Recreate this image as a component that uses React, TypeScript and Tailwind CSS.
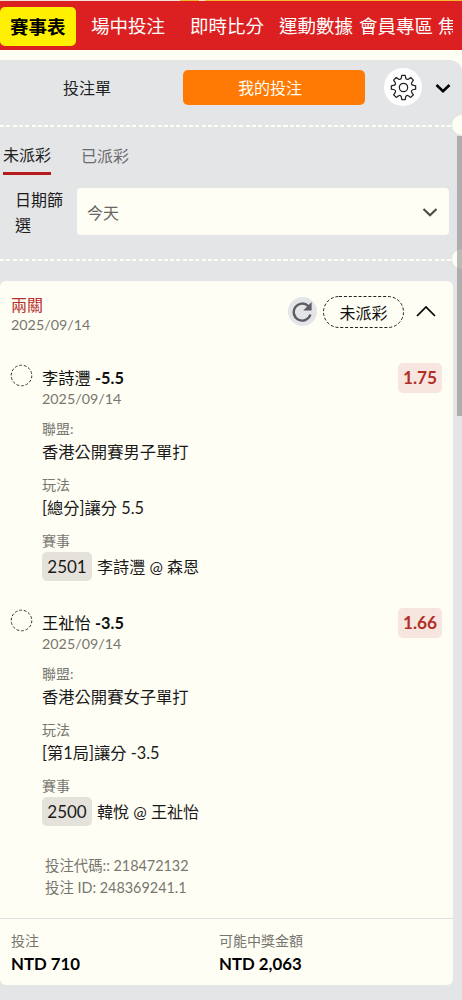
import clsx from "clsx";

interface Leg {
  id: string;
  player: string;
  handicap: string;
  date: string;
  odds: string;
  league: string;
  market: string;
  matchCode: string;
  match: string;
}

const legs: Leg[] = [
  {
    id: "2501",
    player: "李詩灃",
    handicap: "-5.5",
    date: "2025/09/14",
    odds: "1.75",
    league: "香港公開賽男子單打",
    market: "[總分]讓分 5.5",
    matchCode: "2501",
    match: "李詩灃 @ 森恩",
  },
  {
    id: "2500",
    player: "王祉怡",
    handicap: "-3.5",
    date: "2025/09/14",
    odds: "1.66",
    league: "香港公開賽女子單打",
    market: "[第1局]讓分 -3.5",
    matchCode: "2500",
    match: "韓悅 @ 王祉怡",
  },
];

const TopNav = () => (
  <div className="shrink-0">
    <div className="flex h-px bg-[#f3dfdc]">
      <div className="ml-[180px] w-[19px] bg-[#f0b92c]" />
      <div className="ml-[6px] flex-1 bg-[#f3b92f]" />
    </div>
    <nav className="flex h-[49px] items-center overflow-hidden bg-[#dc1f20] text-[18.5px] leading-[39px] whitespace-nowrap text-white">
      <a className="mt-px h-[39px] w-[76px] shrink-0 rounded-[5px] bg-[#fff000] pl-[10px] leading-[40px] font-bold text-black">賽事表</a>
      <a className="mt-px ml-[15px] w-[74px] shrink-0">場中投注</a>
      <a className="mt-px ml-[25px] w-[74px] shrink-0">即時比分</a>
      <a className="mt-px ml-[15px] w-[74px] shrink-0">運動數據</a>
      <a className="mt-px ml-[6px] w-[74px] shrink-0">會員專區</a>
      <a className="mt-px ml-[5px] w-[15px] shrink-0 overflow-hidden">焦</a>
    </nav>
  </div>
);

const Perforation = () => (
  <div className="relative h-[2px] shrink-0">
    <div className="mr-[10px] h-[2px] bg-[repeating-linear-gradient(90deg,#fffef5_0px,#fffef5_4px,transparent_4px,transparent_6.3px)]" />
    <div className="absolute -top-[10px] left-[452px] h-5 w-5 rounded-full bg-[#fffef5]" />
  </div>
);

const GearIcon = () => (
  <svg className="h-[27px] w-[27px]" viewBox="0 0 24 24" fill="none" stroke="#222" strokeWidth="1.1" strokeLinejoin="round">
    <path d="M10.5 1.2h3l.5 2.500c.1.5.5.8.9 1 .5.2 1 .2 1.400-.1l2.200-1.500 2.300 2.300-1.500 2.200c-.3.4-.3.9-.1 1.400.2.4.5.8 1 .9l2.600.6v3l-2.600.5c-.5.1-.8.5-1 .9-.2.5-.2 1 .1 1.400l1.500 2.200-2.300 2.300-2.200-1.500c-.4-.3-.9-.3-1.400-.1-.4.2-.8.5-.9 1l-.5 2.600h-3l-.5-2.600c-.1-.5-.5-.8-.9-1-.5-.2-1-.2-1.400.1l-2.200 1.500-2.300-2.300 1.500-2.200c.3-.4.3-.9.1-1.400-.2-.4-.5-.8-1-.9l-2.600-.5v-3l2.600-.6c.5-.1.8-.5 1-.9.2-.5.2-1-.1-1.400l-1.500-2.200 2.300-2.300 2.200 1.500c.4.3.9.3 1.400.1.4-.2.8-.5.9-1z" />
    <circle cx="12" cy="12" r="3.7" />
  </svg>
);

const SlipHeader = () => (
  <div className="flex h-[65px] shrink-0 pt-[10px]">
    <button className="h-[35px] w-[174px] text-center text-[16px] leading-[35px] text-[#222]">投注單</button>
    <button className="ml-[9px] h-[35px] w-[182px] rounded-[5px] bg-[#ff7a05] pr-[8px] text-[16px] leading-[35px] text-[#fffdf2]">我的投注</button>
    <button className="-mt-[2px] ml-[19px] flex h-[38px] w-[38px] items-center justify-center rounded-full bg-white">
      <GearIcon />
    </button>
    <svg className="mt-[13px] ml-[13px] h-[12px] w-[16px]" viewBox="0 0 16 12" fill="none" stroke="#000" strokeWidth="2.6">
      <path d="M1.5 2 8 8.3 14.5 2" />
    </svg>
  </div>
);

const Filters = () => (
  <div className="h-[132px] shrink-0 text-[16px]">
    <div className="flex pt-[17px] leading-[21px]">
      <button className="ml-[3px] h-[31px] border-b-[3px] border-[#b81b1e] pb-[7px] text-[#222]">未派彩</button>
      <button className="ml-[30px] mt-px h-[21px] text-[#6c6c6c]">已派彩</button>
    </div>
    <div className="mt-[12px] flex">
      <div className="ml-[15px] w-[62px] pr-[10px] leading-[25px] text-[#1c1c1c]">日期篩選</div>
      <div className="mt-px flex h-[47px] w-[372px] items-center justify-between rounded-[4px] bg-[#fffef5] pr-[11px] pl-[10px] text-[#666]">
        <span className="mt-[2px]">今天</span>
        <svg className="h-[12px] w-[16px]" viewBox="0 0 16 12" fill="none" stroke="#4e4d48" strokeWidth="2.2">
          <path d="M1.5 3 8 9.3 14.5 3" />
        </svg>
      </div>
    </div>
  </div>
);

const Field = ({ label, children, className }: { label: string; children: React.ReactNode; className?: string }) => (
  <div className={clsx("h-[56px]", className)}>
    <div className="text-[14px] leading-[20px] text-[#77766f]">{label}</div>
    <div className="-mt-px flex h-[28px] items-center text-[16.3px] leading-[28px] text-[#1a1a1a]">{children}</div>
  </div>
);

const LegItem = ({ leg }: { leg: Leg }) => (
  <div className="flex h-[245px]">
    <svg className="mt-px ml-[10px] h-[23px] w-[23px] shrink-0" viewBox="0 0 23 23" fill="none">
      <circle cx="11.5" cy="11.5" r="10.3" stroke="#333" strokeWidth="1" strokeDasharray="2.8 1.8" />
    </svg>
    <div className="ml-[9px] flex-1">
      <div className="pt-px text-[16.3px] leading-[27px] text-[#111]">
        {leg.player} <span className="font-bold">{leg.handicap}</span>
      </div>
      <div className="-mt-[2px] text-[14.3px] leading-[20px] text-[#77766f]">{leg.date}</div>
      <Field label="聯盟:" className="mt-[10px]">{leg.league}</Field>
      <Field label="玩法">{leg.market}</Field>
      <Field label="賽事">
        <span className="mt-[4px] mr-[5px] h-[29px] w-[50px] shrink-0 rounded-[5px] bg-[#e5e2dc] text-center text-[17px] leading-[29px]">{leg.matchCode}</span>
        <span className="mt-[5px] text-[16.1px]">{leg.match}</span>
      </Field>
    </div>
    <div className="mr-[11px] h-[30px] w-[44px] rounded-[5px] bg-[#f7e5df] text-center text-[17.3px] font-bold leading-[30px] text-[#b02e26]">
      {leg.odds}
    </div>
  </div>
);

const BetCard = () => (
  <div className="mt-[20px] flex h-[704px] w-[453px] shrink-0 flex-col rounded-[6px] bg-[#fffef5]">
    <div className="flex h-[82px] shrink-0 pt-[12px]">
      <div className="ml-[11px] w-[277px]">
        <div className="text-[16px] leading-[24px] text-[#b6302c]">兩關</div>
        <div className="-mt-[2px] text-[14.3px] leading-[20px] text-[#77766f]">2025/09/14</div>
      </div>
      <button className="mt-[4px] flex h-[29px] w-[29px] items-center justify-center rounded-full bg-[#e4e5e8]">
        <svg className="h-[22px] w-[22px]" viewBox="0 0 22 22" fill="none">
          <path d="M16.3 5.1A8.5 8.5 0 1 0 18.4 13.5" stroke="#5c5e63" strokeWidth="2.4" />
          <path d="M19.6 1v8.4h-8.400z" fill="#5c5e63" />
        </svg>
      </button>
      <div className="relative mt-[3px] ml-[6px] h-[33px] w-[81px] text-center text-[16px] leading-[34px] text-[#111]">
        <svg className="absolute inset-0 h-[33px] w-[81px]" viewBox="0 0 81 33" fill="none">
          <rect x=".5" y=".5" width="80" height="31" rx="15.5" stroke="#222" strokeWidth="1" strokeDasharray="3 1.9" />
        </svg>
        未派彩
      </div>
      <svg className="mt-[11px] ml-[12px] h-[14px] w-[20px]" viewBox="0 0 20 14" fill="none" stroke="#000" strokeWidth="1.7">
        <path d="M1 12 10 3l9 9" />
      </svg>
    </div>
    {legs.map((leg) => (
      <LegItem key={leg.id} leg={leg} />
    ))}
    <div className="mt-[2px] ml-[45px] text-[14.4px] leading-[21.500px] text-[#77766f]">
      <div>投注代碼:: 218472132</div>
      <div>投注 ID: 248369241.1</div>
    </div>
    <div className="mt-auto flex h-[67px] border-t border-[#dfe0df] pt-[12px]">
      <div className="ml-[11px] w-[208px]">
        <div className="text-[14px] leading-[20px] text-[#77766f]">投注</div>
        <div className="text-[16.8px] font-bold leading-[26px] text-black">NTD 710</div>
      </div>
      <div>
        <div className="text-[14px] leading-[20px] text-[#77766f]">可能中獎金額</div>
        <div className="text-[16.8px] font-bold leading-[26px] text-black">NTD 2,063</div>
      </div>
    </div>
  </div>
);

const App = () => {
  return (
    <div className="flex h-[1000px] w-[462px] flex-col overflow-hidden bg-[#fffef5] font-['Lato','Noto_Sans_CJK_TC',sans-serif]">
      <TopNav />
      <main className="relative mt-[10px] flex h-[940px] shrink-0 flex-col overflow-hidden rounded-tr-[12px] bg-[#e4e5e7]">
        <SlipHeader />
        <Perforation />
        <Filters />
        <Perforation />
        <BetCard />
        <div className="absolute top-[76px] right-0 h-[280px] w-[5px] bg-[#808080]/55" />
      </main>
    </div>
  );
};

export default App;
